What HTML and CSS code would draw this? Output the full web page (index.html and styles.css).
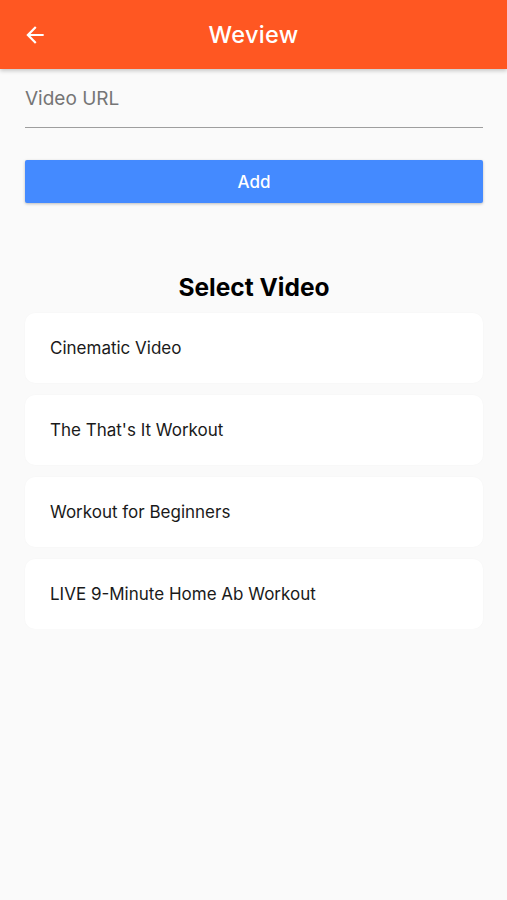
FILE: index.html
```html
<!DOCTYPE html>
<html lang="en">
<head>
    <meta charset="UTF-8">
    <meta name="viewport" content="width=device-width, initial-scale=1.0">
    <title>Weview</title>
    <link rel="stylesheet" href="styles.css">
</head>
<body>
    <header class="app-bar">
        <button class="back-btn" aria-label="Back">
            <svg width="26" height="26" viewBox="0 0 24 24">
                <path d="M20 11H7.83l5.59-5.59L12 4l-8 8 8 8 1.41-1.41L7.83 13H20v-2z" fill="#fff"/>
            </svg>
        </button>
        <h1 class="app-title">Weview</h1>
    </header>
    <main class="content">
        <div class="url-field">
            <span class="url-placeholder">Video URL</span>
        </div>
        <button class="add-btn">Add</button>

        <h2 class="section-title">Select Video</h2>
        <ul class="video-list">
            <li class="video-card">Cinematic Video</li>
            <li class="video-card">The That's It Workout</li>
            <li class="video-card">Workout for Beginners</li>
            <li class="video-card">LIVE 9-Minute Home Ab Workout</li>
        </ul>
    </main>
</body>
</html>
```

FILE: styles.css
```css
/* Global */
body {
    font-family: 'Inter', 'Roboto', sans-serif;
    background-color: #fafafa;
    color: #111;
    margin: 0;
    padding: 0;
}

/* App bar */
.app-bar {
    height: 69px;
    background-color: #ff5722;
    display: flex;
    align-items: center;
    justify-content: center;
    position: relative;
    box-shadow: 0 2px 4px rgba(0, 0, 0, 0.2);
}
.back-btn {
    position: absolute;
    left: 22px;
    top: 22px;
    padding: 0;
    border: none;
    background: none;
    display: flex;
}
.app-title {
    margin: 0;
    color: #fff;
    font-size: 23.5px;
    font-weight: 500;
    letter-spacing: 0.3px;
}

/* Content */
.content {
    padding: 0 24px 0 25px;
}
.url-field {
    height: 58px;
    border-bottom: 1px solid #9e9e9e;
    display: flex;
    align-items: center;
}
.url-placeholder {
    color: #757575;
    font-size: 19px;
    margin-top: 1px;
}
.add-btn {
    display: block;
    width: 100%;
    height: 43px;
    margin-top: 32px;
    border: none;
    border-radius: 2px;
    background-color: #448aff;
    color: #fff;
    font-family: inherit;
    font-size: 17px;
    font-weight: 500;
    box-shadow: 0 1px 3px rgba(0, 0, 0, 0.25);
}

.section-title {
    margin: 69px 0 0;
    text-align: center;
    font-size: 24.5px;
    font-weight: 700;
    color: #000;
    line-height: 30px;
}

/* Video list */
.video-list {
    list-style: none;
    margin: 11px 0 0;
    padding: 0;
    display: flex;
    flex-direction: column;
    gap: 12px;
}
.video-card {
    height: 70px;
    background: #fff;
    border-radius: 10px;
    display: flex;
    align-items: center;
    padding-left: 25px;
    font-size: 17px;
    color: #1a1a1a;
    box-shadow: 0 0 2px rgba(0, 0, 0, 0.03);
}
```
